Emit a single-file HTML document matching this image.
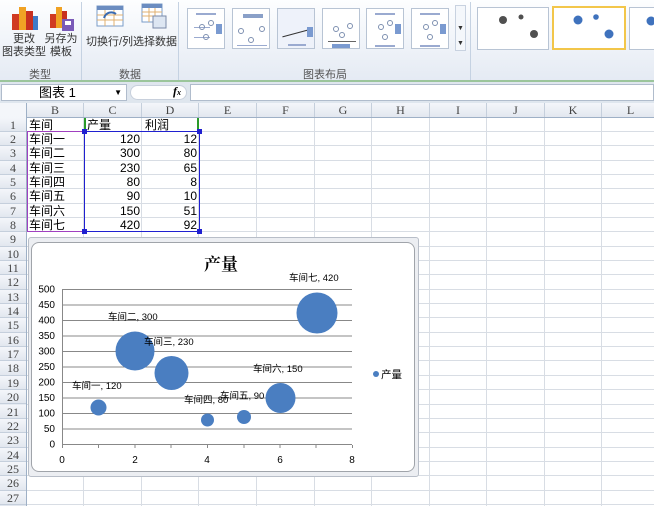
<!DOCTYPE html>
<html><head><meta charset="utf-8"><style>
*{margin:0;padding:0;box-sizing:border-box}
body{width:654px;height:506px;overflow:hidden;background:#fff;position:relative;font-family:"Liberation Sans","Noto Sans CJK SC",sans-serif;font-size:12px;color:#000}
.a{position:absolute}
.rib{left:0;top:0;width:654px;height:82px;background:linear-gradient(#fdfeff,#eef2f8 60%,#e4eaf3)}
.gl{font-size:11px;color:#555;text-align:center;white-space:nowrap}
.sep{width:1px;background:#c5d2e2;top:2px;height:78px}
.th{width:38px;height:41px;border:1px solid #b8c4d4;background:#fff}
.th i{position:absolute;border:1px solid #7d8fb0;border-radius:50%;width:6px;height:6px}
.th b{position:absolute;height:2px;background:#9aaad0}
.hdr{background:linear-gradient(#f4f6fa,#e2e7ef);color:#444;font-size:12px;text-align:center;font-family:"Liberation Serif","Noto Serif CJK SC",serif}
.cell{font-size:12px;line-height:14px}
</style></head><body>
<div class="a rib"></div>
<svg class="a" style="left:10px;top:4px" width="30" height="28"><rect x="2" y="10" width="7" height="16" fill="#d03a22"/><rect x="9" y="3" width="7" height="23" fill="#f0a224"/><rect x="16" y="7" width="7" height="19" fill="#c83020"/><rect x="23" y="12" width="5" height="14" fill="#3e7bc8"/></svg>
<svg class="a" style="left:48px;top:4px" width="28" height="28"><rect x="2" y="10" width="6" height="14" fill="#d03a22"/><rect x="8" y="3" width="6" height="21" fill="#f0a224"/><rect x="14" y="7" width="5" height="12" fill="#c83020"/><rect x="14" y="15" width="12" height="12" fill="#7a5ab8"/><rect x="17" y="17" width="6" height="4" fill="#fff"/></svg>
<div class="a gl" style="left:2px;top:33px;width:44px;color:#333;font-size:11px;line-height:13px">更改<br>图表类型</div>
<div class="a gl" style="left:43px;top:33px;width:36px;color:#333;font-size:11px;line-height:13px">另存为<br>模板</div>
<div class="a gl" style="left:10px;top:66px;width:60px">类型</div>
<div class="a sep" style="left:81px"></div>
<svg class="a" style="left:96px;top:4px" width="28" height="24"><rect x="1" y="2" width="26" height="20" fill="#fff" stroke="#7a9cc8"/><rect x="1" y="2" width="26" height="4" fill="#6a8cc0"/><path d="M1 11h26M1 16h26M9 6v16M18 6v16" stroke="#e0b070"/><path d="M8 14c2-6 8-7 12-4" stroke="#3a6ab0" stroke-width="2" fill="none"/></svg>
<svg class="a" style="left:141px;top:3px" width="26" height="26"><rect x="1" y="1" width="20" height="18" fill="#fff" stroke="#7a9cc8"/><rect x="1" y="1" width="20" height="4" fill="#6a8cc0"/><path d="M1 9h20M1 13h20M8 5v14M14 5v14" stroke="#e0b070"/><rect x="12" y="13" width="13" height="12" fill="#dde6f2" stroke="#7a8aa8"/></svg>
<div class="a gl" style="left:86px;top:33px;width:46px;color:#333;font-size:11px">切换行/列</div>
<div class="a gl" style="left:133px;top:33px;width:42px;color:#333;font-size:11px">选择数据</div>
<div class="a gl" style="left:100px;top:66px;width:60px">数据</div>
<div class="a sep" style="left:178px"></div>
<div class="a th" style="left:187px;top:8px"><b style="left:8px;top:4px;width:20px"></b><b style="left:6px;top:18px;width:16px;height:1px"></b><b style="left:6px;top:28px;width:16px;height:1px"></b><i style="left:11px;top:15px"></i><i style="left:20px;top:11px"></i><i style="left:15px;top:25px"></i><b style="left:28px;top:15px;width:6px;height:10px;background:#7a9ad0"></b></div>
<div class="a th" style="left:232px;top:8px"><b style="left:10px;top:5px;width:20px;height:4px;background:#8aa0c8"></b><i style="left:5px;top:19px"></i><i style="left:26px;top:17px"></i><i style="left:15px;top:28px"></i><b style="left:4px;top:36px;width:30px;height:1px"></b></div>
<div class="a th" style="left:277px;top:8px;background:#eef2fa"><b style="left:4px;top:24px;width:26px;height:1px;background:#333;transform:rotate(-15deg)"></b><b style="left:10px;top:35px;width:18px"></b><b style="left:29px;top:18px;width:6px;height:10px;background:#7a9ad0"></b></div>
<div class="a th" style="left:322px;top:8px"><i style="left:10px;top:17px"></i><i style="left:24px;top:14px"></i><i style="left:16px;top:23px"></i><b style="left:5px;top:32px;width:28px;height:1px;background:#666"></b><b style="left:9px;top:35px;width:18px;height:4px;background:#7a9ad0"></b></div>
<div class="a th" style="left:366px;top:8px"><b style="left:8px;top:4px;width:20px"></b><i style="left:11px;top:15px"></i><i style="left:20px;top:11px"></i><i style="left:15px;top:25px"></i><b style="left:28px;top:15px;width:6px;height:10px;background:#7a9ad0"></b><b style="left:8px;top:36px;width:20px"></b></div>
<div class="a th" style="left:411px;top:8px"><b style="left:8px;top:4px;width:20px"></b><i style="left:11px;top:15px"></i><i style="left:20px;top:11px"></i><i style="left:15px;top:25px"></i><b style="left:28px;top:15px;width:6px;height:10px;background:#7a9ad0"></b><b style="left:8px;top:36px;width:20px"></b></div>
<div class="a" style="left:455px;top:5px;width:11px;height:46px;border:1px solid #c8d2e0;background:#f4f7fb;font-size:7px;color:#333;text-align:center;line-height:15px">&nbsp;<br>▼<br>▼</div>
<div class="a gl" style="left:190px;top:66px;width:270px">图表布局</div>
<div class="a sep" style="left:470px"></div>
<div class="a" style="left:477px;top:7px;width:72px;height:43px;background:#fff;border:1px solid #b8c4d4"></div>
<svg class="a" style="left:477px;top:7px" width="72" height="43"><circle cx="26" cy="13" r="4" fill="#505050"/><circle cx="44" cy="10" r="2.5" fill="#505050"/><circle cx="57" cy="27" r="4" fill="#505050"/></svg>
<div class="a" style="left:552px;top:6px;width:74px;height:44px;background:#fff;border:2px solid #f2c64a"></div>
<svg class="a" style="left:552px;top:6px" width="74" height="44"><circle cx="26" cy="14" r="4.5" fill="#3f72bd"/><circle cx="44" cy="11" r="2.8" fill="#3f72bd"/><circle cx="57" cy="28" r="4.5" fill="#3f72bd"/></svg>
<div class="a" style="left:629px;top:7px;width:30px;height:43px;background:#fff;border:1px solid #b8c4d4"></div>
<svg class="a" style="left:629px;top:7px" width="25" height="43"><circle cx="22" cy="14" r="4.5" fill="#3f72bd"/></svg>
<div class="a" style="left:0;top:80px;width:654px;height:2px;background:#9bc59b"></div>
<div class="a" style="left:0;top:82px;width:654px;height:21px;background:#dfe6ee"></div>
<div class="a" style="left:1px;top:84px;width:126px;height:17px;background:#fff;border:1px solid #b0bccc;font-size:13px;line-height:15px;padding-left:37px">图表 1<span style="position:absolute;right:4px;font-size:8px">▼</span></div>
<div class="a" style="left:130px;top:85px;width:57px;height:15px;background:#fff;border:1px solid #c8d0dc;border-radius:8px"></div>
<div class="a" style="left:173px;top:84px;font-style:italic;font-family:'Liberation Serif',serif;font-size:12px;font-weight:bold">f<span style="font-size:8px">x</span></div>
<div class="a" style="left:190px;top:84px;width:464px;height:17px;background:#fff;border:1px solid #b0bccc"></div>
<div class="a hdr" style="left:0;top:103px;width:654px;height:15px;border-bottom:1px solid #9eb0c6"></div>
<div class="a hdr" style="left:0;top:103px;width:27px;height:403px;border-right:1px solid #9eb0c6"></div>
<div id="g"></div>
<script>
var cols=[27,84,142,199,257,315,372,430,487,545,602,660],L="BCDEFGHIJKL",h='';
for(var i=0;i<11;i++){h+='<div class="a hdr" style="left:'+cols[i]+'px;top:103px;width:'+(cols[i+1]-cols[i])+'px;height:14px;line-height:14px;border-right:1px solid #c5cfdc">'+L[i]+'</div>';
h+='<div class="a" style="left:'+(cols[i+1]-1)+'px;top:118px;width:1px;height:388px;background:#d8dde4"></div>';}
for(var r=1;r<=27;r++){var t=117.5+(r-1)*14.35;
h+='<div class="a hdr" style="left:0;top:'+t+'px;width:26px;height:14.35px;line-height:14px;border-bottom:1px solid #c5cfdc">'+r+'</div>';
h+='<div class="a" style="left:27px;top:'+(t+13.35)+'px;width:627px;height:1px;background:#d8dde4"></div>';}
var d=[["车间","产量","利润"],["车间一",120,12],["车间二",300,80],["车间三",230,65],["车间四",80,8],["车间五",90,10],["车间六",150,51],["车间七",420,92]];
for(var r=0;r<8;r++){var t=117.5+r*14.35;
h+='<div class="a cell" style="left:29px;top:'+t+'px">'+d[r][0]+'</div>';
if(r==0){h+='<div class="a cell" style="left:87px;top:'+t+'px">产量</div><div class="a cell" style="left:145px;top:'+t+'px">利润</div>';}
else{h+='<div class="a cell" style="left:84px;width:56px;text-align:right;top:'+t+'px">'+d[r][1]+'</div><div class="a cell" style="left:142px;width:55px;text-align:right;top:'+t+'px">'+d[r][2]+'</div>';}}
document.getElementById('g').innerHTML=h;
</script>
<div class="a" style="left:84px;top:118px;width:115px;height:14px;border-left:2px solid #2a9a2a;border-right:2px solid #2a9a2a"></div>
<div class="a" style="left:27px;top:131px;width:58px;height:101px;border:1px solid #a040c0"></div>
<div class="a" style="left:84px;top:131px;width:116px;height:101px;border:1px solid #2020d0"></div>
<div class="a" style="left:82px;top:129px;width:5px;height:5px;background:#2020d0"></div>
<div class="a" style="left:197px;top:129px;width:5px;height:5px;background:#2020d0"></div>
<div class="a" style="left:82px;top:229px;width:5px;height:5px;background:#2020d0"></div>
<div class="a" style="left:197px;top:229px;width:5px;height:5px;background:#2020d0"></div>
<div class="a" style="left:28px;top:237px;width:391px;height:240px;background:#eceef2;border:1px solid #b8bec8;border-radius:3px"></div>
<div class="a" style="left:31px;top:242px;width:384px;height:230px;background:#fff;border:1px solid #a0a4aa;border-radius:8px"></div>
<svg class="a" style="left:0;top:0" width="654" height="506" font-family="Liberation Sans,Noto Sans CJK SC,sans-serif">
<g stroke="#888" stroke-width="1">
<line x1="62" x2="352" y1="289.5" y2="289.5"/><line x1="62" x2="352" y1="305" y2="305"/><line x1="62" x2="352" y1="320.5" y2="320.5"/><line x1="62" x2="352" y1="336" y2="336"/><line x1="62" x2="352" y1="351.5" y2="351.5"/><line x1="62" x2="352" y1="367" y2="367"/><line x1="62" x2="352" y1="382.5" y2="382.5"/><line x1="62" x2="352" y1="398" y2="398"/><line x1="62" x2="352" y1="413.5" y2="413.5"/><line x1="62" x2="352" y1="429" y2="429"/><line x1="62" x2="352" y1="444.5" y2="444.5"/>
<line x1="62.5" x2="62.5" y1="289" y2="448"/>
<line x1="98.5" x2="98.5" y1="445" y2="448"/><line x1="135" x2="135" y1="445" y2="448"/><line x1="171" x2="171" y1="445" y2="448"/><line x1="207.5" x2="207.5" y1="445" y2="448"/><line x1="244" x2="244" y1="445" y2="448"/><line x1="280" x2="280" y1="445" y2="448"/><line x1="316" x2="316" y1="445" y2="448"/><line x1="352.5" x2="352.5" y1="445" y2="448"/>
</g>
<g font-size="10" text-anchor="end" fill="#000">
<text x="55" y="292.5">500</text><text x="55" y="308">450</text><text x="55" y="323.5">400</text><text x="55" y="339">350</text><text x="55" y="354.5">300</text><text x="55" y="370">250</text><text x="55" y="385.5">200</text><text x="55" y="401">150</text><text x="55" y="416.5">100</text><text x="55" y="432">50</text><text x="55" y="447.5">0</text>
</g>
<g font-size="10" text-anchor="middle"><text x="62" y="463">0</text><text x="135" y="463">2</text><text x="207" y="463">4</text><text x="280" y="463">6</text><text x="352" y="463">8</text></g>
<text x="221" y="270" font-size="17" font-weight="bold" text-anchor="middle" font-family="Noto Serif CJK SC,serif">产量</text>
<g fill="#4a7ec1">
<circle cx="98.5" cy="407.5" r="8"/><circle cx="135" cy="351" r="19.5"/><circle cx="171.5" cy="373" r="17"/><circle cx="207.5" cy="420" r="6.5"/><circle cx="244" cy="417" r="7"/><circle cx="280.5" cy="398" r="15"/><circle cx="317" cy="313" r="20.5"/><circle cx="376" cy="374" r="3"/>
</g>
<g font-size="9.5">
<text x="72" y="389">车间一, 120</text><text x="108" y="320">车间二, 300</text><text x="144" y="345">车间三, 230</text><text x="184" y="403">车间四, 80</text><text x="220" y="399">车间五, 90</text><text x="253" y="372">车间六, 150</text><text x="289" y="281">车间七, 420</text>
<text x="381" y="378" font-size="10.5">产量</text>
</g>
</svg>
</body></html>
